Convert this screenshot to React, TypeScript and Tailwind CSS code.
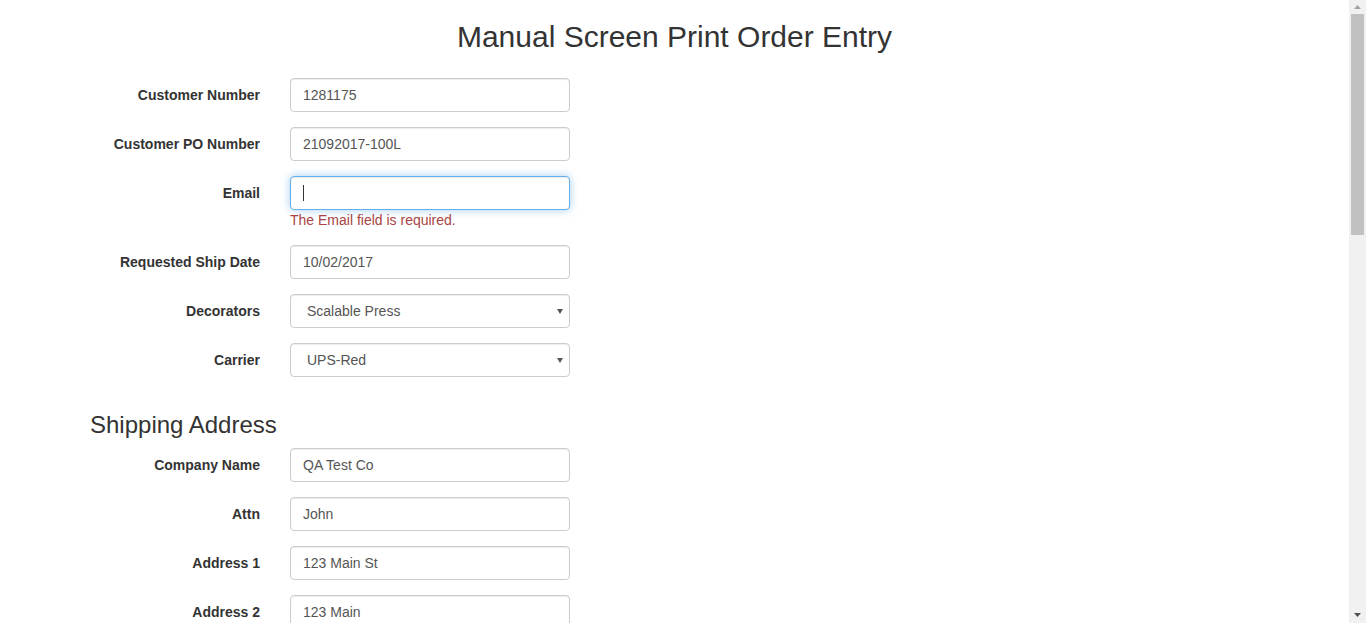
import React from 'react';

type TField = {
    label: string;
    value: string;
}

const orderFields: TField[] = [
    { label: 'Customer Number', value: '1281175' },
    { label: 'Customer PO Number', value: '21092017-100L' },
];

const shippingFields: TField[] = [
    { label: 'Company Name', value: 'QA Test Co' },
    { label: 'Attn', value: 'John' },
    { label: 'Address 1', value: '123 Main St' },
    { label: 'Address 2', value: '123 Main' },
];

const inputClass = 'block w-[280px] h-[34px] rounded-[4px] border border-[#ccc] bg-white px-3 text-[14px] leading-[20px] text-[#555] shadow-[inset_0_1px_1px_rgba(0,0,0,0.075)] outline-none';

const Label = ({ text }: { text: string }) =>
    <label className="w-[170px] shrink-0 pt-[7px] text-right text-[14px] font-bold leading-[20px]">{text}</label>;

const TextRow = ({ field }: { field: TField }) =>
    <div className="mb-[15px] flex items-start gap-[30px]">
        <Label text={field.label} />
        <input className={inputClass} value={field.value} readOnly />
    </div>;

const SelectRow = ({ label, options }: { label: string; options: string[] }) =>
    <div className="mb-[15px] flex items-start gap-[30px]">
        <Label text={label} />
        <div className="relative">
            <select className={`${inputClass} appearance-none pl-[16px]`} defaultValue={options[0]}>
                {options.map(o => <option key={o}>{o}</option>)}
            </select>
            <svg className="pointer-events-none absolute right-[7px] top-[15px]" width="6" height="5" viewBox="0 0 6 5">
                <path d="M0 0h6L3 5z" fill="#555" />
            </svg>
        </div>
    </div>;

const Scrollbar = () =>
    <div className="flex w-[17px] shrink-0 flex-col items-center bg-[#f1f1f1]">
        <div className="flex h-[14px] w-full items-center justify-center">
            <svg width="7" height="4" viewBox="0 0 7 4"><path d="M3.5 0L7 4H0z" fill="#a3a3a3" /></svg>
        </div>
        <div className="h-[221px] w-[13px] bg-[#c1c1c1]" />
        <div className="flex-1" />
        <div className="flex h-[17px] w-full items-center justify-center">
            <svg width="7" height="4" viewBox="0 0 7 4"><path d="M0 0h7L3.5 4z" fill="#505050" /></svg>
        </div>
    </div>;

export default function App() {
    return <div className="flex h-screen overflow-hidden bg-white font-['Liberation_Sans',Arial,sans-serif] text-[#333]">
        <div className="w-[1349px] shrink-0 overflow-hidden">
            <h2 className="mt-5 mb-[25px] text-center text-[30px] leading-[33px] font-medium">Manual Screen Print Order Entry</h2>
            <form className="pl-[90px]">
                {orderFields.map(f => <TextRow key={f.label} field={f} />)}

                <div className="mb-[15px] flex items-start gap-[30px]">
                    <Label text="Email" />
                    <div className="flex flex-col">
                        <div className="flex h-[34px] w-[280px] items-center rounded-[4px] border border-[#66afe9] bg-white px-3 shadow-[inset_0_1px_1px_rgba(0,0,0,0.075),0_0_8px_rgba(102,175,233,0.6)]">
                            <span className="h-[16px] w-px bg-[#333]" />
                        </div>
                        <span className="text-[14px] leading-[20px] text-[#a94442]">The Email field is required.</span>
                    </div>
                </div>

                <TextRow field={{ label: 'Requested Ship Date', value: '10/02/2017' }} />
                <SelectRow label="Decorators" options={['Scalable Press', 'Other Decorator']} />
                <SelectRow label="Carrier" options={['UPS-Red', 'UPS-Ground', 'FedEx']} />

                <h3 className="mt-[35px] mb-[10px] text-[24px] leading-[26.4px] font-medium">Shipping Address</h3>
                {shippingFields.map(f => <TextRow key={f.label} field={f} />)}
            </form>
        </div>
        <Scrollbar />
    </div>;
}
